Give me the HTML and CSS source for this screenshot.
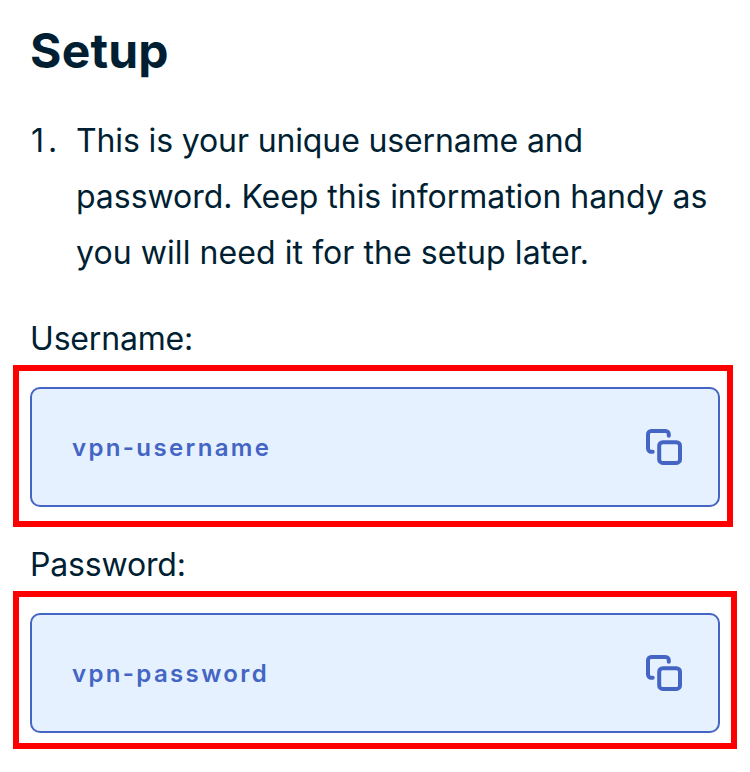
FILE: index.html
```html
<!DOCTYPE html>
<html lang="en">
<head>
<meta charset="utf-8">
<title>Setup</title>
<link rel="stylesheet" href="styles.css">
</head>
<body>
<main class="setup">
  <h1 class="title">Setup</h1>
  <ol class="steps">
    <li class="step"><span class="num">1.</span><p class="text"><span class="line-first">This is your unique username and</span> <span class="line-middle">password. Keep this information handy as</span> <span class="line-last">you will need it for the setup later.</span></p></li>
  </ol>
  <section class="group">
    <h2 class="label">Username:</h2>
    <div class="highlight">
      <div class="field"><span class="value">vpn-username</span>
        <svg class="copy" viewBox="0 0 40 40" fill="none" stroke="currentColor" stroke-width="4" stroke-linecap="round" stroke-linejoin="round"><rect x="15.2" y="15.2" width="20.8" height="20.8" rx="3.6"/><path d="M8.7 24.8H7.2A3.2 3.2 0 0 1 4 21.6V7.2A3.2 3.2 0 0 1 7.2 4h14.4a3.2 3.2 0 0 1 3.2 3.2v1.5"/></svg>
      </div>
    </div>
  </section>
  <section class="group">
    <h2 class="label">Password:</h2>
    <div class="highlight highlight-wide">
      <div class="field"><span class="value">vpn-password</span>
        <svg class="copy" viewBox="0 0 40 40" fill="none" stroke="currentColor" stroke-width="4" stroke-linecap="round" stroke-linejoin="round"><rect x="15.2" y="15.2" width="20.8" height="20.8" rx="3.6"/><path d="M8.7 24.8H7.2A3.2 3.2 0 0 1 4 21.6V7.2A3.2 3.2 0 0 1 7.2 4h14.4a3.2 3.2 0 0 1 3.2 3.2v1.5"/></svg>
      </div>
    </div>
  </section>
</main>
</body>
</html>
```
FILE: styles.css
```css
* { box-sizing: border-box; }
body { margin: 0; background: #fff; color: #001f33; font-family: Inter, "Liberation Sans", sans-serif; }
.setup { width: 750px; height: 772px; padding-top: 20px; overflow: hidden; }
.title { margin: 0 30px; font-size: 48px; line-height: 62px; font-weight: 700; letter-spacing: 0.2px; }
.steps { list-style: none; margin: 31px 0 30px 30px; padding: 0; }
.step { display: flex; font-size: 32px; line-height: 56px; }
.num { width: 46px; flex: none; padding-left: 1px; letter-spacing: 4px; }
.text { margin: 0; width: 650px; }
.line-first { letter-spacing: -0.13px; }
.line-middle { letter-spacing: -0.04px; }
.line-last { letter-spacing: 0.07px; }
.group { height: 226px; }
.label { margin: 0 30px; font-size: 32px; line-height: 56px; font-weight: 400; letter-spacing: -0.18px; }
.highlight { margin: -2px 0 0 13px; width: 720px; height: 162px; border: 6px solid #f00; padding: 16px 7px 0 11px; }
.highlight-wide { width: 724px; height: 158px; }
.field { width: 690px; height: 120px; border: 2px solid #4465c3; border-radius: 10px; background: #e5f1ff; color: #4465c3; display: flex; align-items: center; justify-content: space-between; padding: 0 34px 0 40px; }
.value { padding-top: 2px; font-size: 24px; line-height: 32px; font-weight: 600; letter-spacing: 2.36px; }
.copy { width: 40px; height: 40px; }
```
